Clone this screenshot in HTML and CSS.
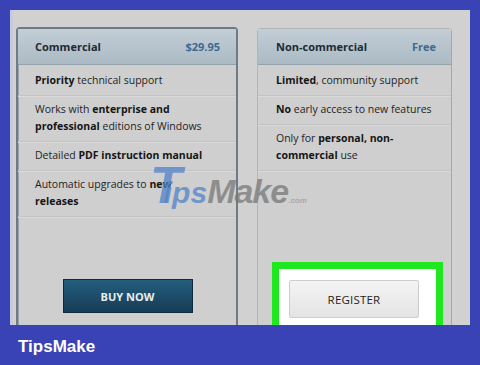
FILE: index.html
```html
<!DOCTYPE html>
<html>
<head>
<meta charset="utf-8">
<link rel="stylesheet" href="styles.css">
</head>
<body>
<div class="panel">
  <div class="card card-com">
    <div class="card-head"><span class="plan">Commercial</span><span class="price">$29.95</span></div>
    <div class="row row-first"><b>Priority</b> technical support</div>
    <div class="row">Works with <b>enterprise and</b><br><b>professional</b> editions of Windows</div>
    <div class="row">Detailed <b>PDF instruction manual</b></div>
    <div class="row">Automatic upgrades to <b>new</b><br><b>releases</b></div>
    <div class="spacer"></div>
    <div class="btn-wrap"><button class="btn btn-buy">BUY NOW</button></div>
  </div>
  <div class="card card-free">
    <div class="card-head"><span class="plan">Non-commercial</span><span class="price">Free</span></div>
    <div class="row row-first"><b>Limited</b>, community support</div>
    <div class="row"><b>No</b> early access to new features</div>
    <div class="row">Only for <b>personal, non-</b><br><b>commercial</b> use</div>
    <div class="spacer"></div>
    <div class="highlight"><button class="btn btn-reg">REGISTER</button></div>
  </div>
  <div class="watermark"><span class="wm-t">T</span><span class="wm-ips">ips</span><span class="wm-make">Make</span><span class="wm-com">.com</span></div>
</div>
<div class="footer">TipsMake</div>
</body>
</html>
```
FILE: styles.css
```css
html, body { margin: 0; padding: 0; }
body {
  width: 480px;
  height: 365px;
  background: #3a43b6;
  font-family: "Open Sans", "Noto Sans", sans-serif;
  overflow: hidden;
}
.panel {
  position: relative;
  margin: 10px 10px 0 10px;
  height: 315px;
  background: #d1d1d1;
  display: flex;
  align-items: flex-start;
  padding: 17px 19px 0 6px;
  box-sizing: border-box;
  gap: 19px;
  overflow: hidden;
  border-left: 3px solid #c4ccdc;
}
.card {
  height: 310px;
  box-sizing: border-box;
  display: flex;
  flex-direction: column;
  background: #cfcfcf;
  border-radius: 4px 4px 0 0;
  flex: none;
}
.card-com {
  width: 222px;
  margin-left: -3px;
  border: 2px solid #6e7b84;
  box-shadow: inset 1px 0 0 #9aa4aa;
}
.card-free {
  width: 195px;
  margin-top: 1px;
  border: 1px solid #b2b6ba;
  border-right-color: #a8a8a8;
}
.card-head {
  height: 35px;
  display: flex;
  align-items: center;
  justify-content: space-between;
  padding: 0 16px 0 17px;
  background: linear-gradient(#c3ced6, #abbac4);
  border-bottom: 1px solid #93a3ad;
  font-weight: 700;
  font-size: 11px;
  color: #1d2a33;
}
.card-free .card-head { padding: 0 15px 0 18px; }
.price { color: #3b6b92; }
.row {
  padding: 5px 12px 6px 17px;
  font-size: 10.5px;
  line-height: 17px;
  color: #1e1e1e;
  border-bottom: 1px solid #c3c3c3;
  box-shadow: 0 1px 0 #dadada;
  white-space: nowrap;
}
.row-first { padding-top: 7px; }
.card-free .row { padding-left: 18px; padding-right: 10px; }
.row b { font-weight: 700; color: #151515; }
.spacer { flex: 1; }
.btn-wrap {
  display: flex;
  justify-content: center;
  padding-bottom: 22px;
}
.btn {
  font-family: "Open Sans", "Noto Sans", sans-serif;
  font-size: 11px;
  cursor: pointer;
}
.btn-buy {
  width: 130px;
  height: 34px;
  margin-left: 1px;
  background: linear-gradient(#245e7e, #173c55);
  border: 1px solid #0f2a3c;
  color: #e8eef2;
  font-weight: 700;
}
.highlight {
  margin: 0 8px -22px 14px;
  border: 7px solid #1fe81f;
  border-bottom: none;
  background: #ffffff;
  padding: 11px 9px 24px 10px;
  height: 55px;
  box-sizing: content-box;
}
.btn-reg {
  width: 130px;
  height: 38px;
  background: linear-gradient(#f4f4f4, #e4e4e4);
  border: 1px solid #cdcdcd;
  border-radius: 2px;
  color: #1e1e1e;
  font-weight: 500;
  font-size: 11.5px;
  letter-spacing: 0.2px;
}
.watermark {
  position: absolute;
  left: 137px;
  top: 145px;
  font-family: "Liberation Sans", Arial, sans-serif;
  font-style: italic;
  font-weight: 700;
  white-space: nowrap;
  pointer-events: none;
}
.wm-t { font-size: 52px; color: rgba(80, 130, 200, 0.75); letter-spacing: -18px; }
.wm-ips { font-size: 30px; color: rgba(80, 130, 200, 0.75); }
.wm-make { font-size: 34px; color: rgba(120, 120, 120, 0.75); letter-spacing: -1px; }
.wm-com { font-size: 8px; color: rgba(140, 140, 140, 0.6); }
.footer {
  height: 40px;
  box-sizing: border-box;
  display: flex;
  align-items: center;
  padding: 4px 0 0 18px;
  font-family: "Liberation Sans", Arial, sans-serif;
  font-weight: 700;
  font-size: 17px;
  color: #ffffff;
}
```
